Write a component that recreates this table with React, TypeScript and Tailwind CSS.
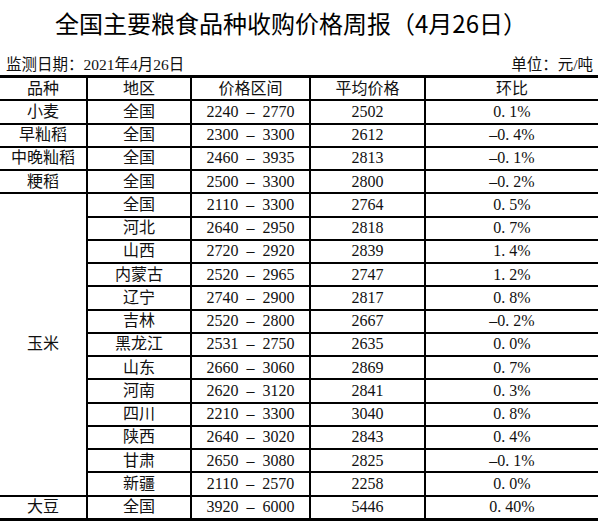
import type { ReactNode } from "react"

type Row = { area: string; lo: string; hi: string; avg: string; hb: string }

const CORN: Row[] = [
  { area: "全国", lo: "2110", hi: "3300", avg: "2764", hb: "0.5%" },
  { area: "河北", lo: "2640", hi: "2950", avg: "2818", hb: "0.7%" },
  { area: "山西", lo: "2720", hi: "2920", avg: "2839", hb: "1.4%" },
  { area: "内蒙古", lo: "2520", hi: "2965", avg: "2747", hb: "1.2%" },
  { area: "辽宁", lo: "2740", hi: "2900", avg: "2817", hb: "0.8%" },
  { area: "吉林", lo: "2520", hi: "2800", avg: "2667", hb: "-0.2%" },
  { area: "黑龙江", lo: "2531", hi: "2750", avg: "2635", hb: "0.0%" },
  { area: "山东", lo: "2660", hi: "3060", avg: "2869", hb: "0.7%" },
  { area: "河南", lo: "2620", hi: "3120", avg: "2841", hb: "0.3%" },
  { area: "四川", lo: "2210", hi: "3300", avg: "3040", hb: "0.8%" },
  { area: "陕西", lo: "2640", hi: "3020", avg: "2843", hb: "0.4%" },
  { area: "甘肃", lo: "2650", hi: "3080", avg: "2825", hb: "-0.1%" },
  { area: "新疆", lo: "2110", hi: "2570", avg: "2258", hb: "0.0%" },
]

const SINGLE: (Row & { kind: string })[] = [
  { kind: "小麦", area: "全国", lo: "2240", hi: "2770", avg: "2502", hb: "0.1%" },
  { kind: "早籼稻", area: "全国", lo: "2300", hi: "3300", avg: "2612", hb: "-0.4%" },
  { kind: "中晚籼稻", area: "全国", lo: "2460", hi: "3935", avg: "2813", hb: "-0.1%" },
  { kind: "粳稻", area: "全国", lo: "2500", hi: "3300", avg: "2800", hb: "-0.2%" },
]

const SOY: Row & { kind: string } = { kind: "大豆", area: "全国", lo: "3920", hi: "6000", avg: "5446", hb: "0.40%" }

// 宋体里的半角字符都占半个字宽，点号后面留出空隙
function Pct({ s }: { s: string }) {
  const neg = s.startsWith("-")
  const [a, b] = (neg ? s.slice(1) : s).split(".")
  return (
    <span>
      {neg && "–"}
      {a}.<span className="inline-block w-[4px]" />
      {b}
    </span>
  )
}

function Cell({ children }: { children: ReactNode }) {
  return <div className="flex items-center justify-center bg-white leading-none">{children}</div>
}

function DataCells({ r }: { r: Row }) {
  return (
    <>
      <Cell>{r.area}</Cell>
      <Cell>{`${r.lo}\u2002–\u2002${r.hi}`}</Cell>
      <Cell>{r.avg}</Cell>
      <Cell>
        <Pct s={r.hb} />
      </Cell>
    </>
  )
}

export default function App() {
  return (
    <div className="h-[528px] w-[600px] bg-white text-[#111]">
      <div className="h-[55px] pr-[18px] pt-[7px] text-center font-['Noto_Sans_CJK_SC',sans-serif] text-[24px] leading-[32px] text-black">
        全国主要粮食品种收购价格周报（4月26日）
      </div>

      <div className="flex h-[20px] items-center justify-between pl-[6px] pr-[7px] font-['Liberation_Serif','Noto_Sans_CJK_SC',serif] text-[15.5px] leading-[20px]">
        <span>监测日期：2021年4月26日</span>
        <span>单位：元/吨</span>
      </div>

      <div className="grid w-[598px] auto-rows-[21.25px] grid-cols-[86px_102px_117px_113px_172px] gap-[2px] bg-black py-[3px] font-['Liberation_Serif','Noto_Sans_CJK_SC',serif] text-[16px]">
        <Cell>品种</Cell>
        <Cell>地区</Cell>
        <Cell>价格区间</Cell>
        <Cell>平均价格</Cell>
        <Cell>环比</Cell>

        {SINGLE.map((r) => (
          <div key={r.kind} className="contents">
            <Cell>{r.kind}</Cell>
            <DataCells r={r} />
          </div>
        ))}

        <div className="col-start-1 row-span-13 flex items-center justify-center bg-white">玉米</div>
        {CORN.map((r) => (
          <div key={r.area} className="contents">
            <DataCells r={r} />
          </div>
        ))}

        <Cell>{SOY.kind}</Cell>
        <DataCells r={SOY} />
      </div>
    </div>
  )
}
